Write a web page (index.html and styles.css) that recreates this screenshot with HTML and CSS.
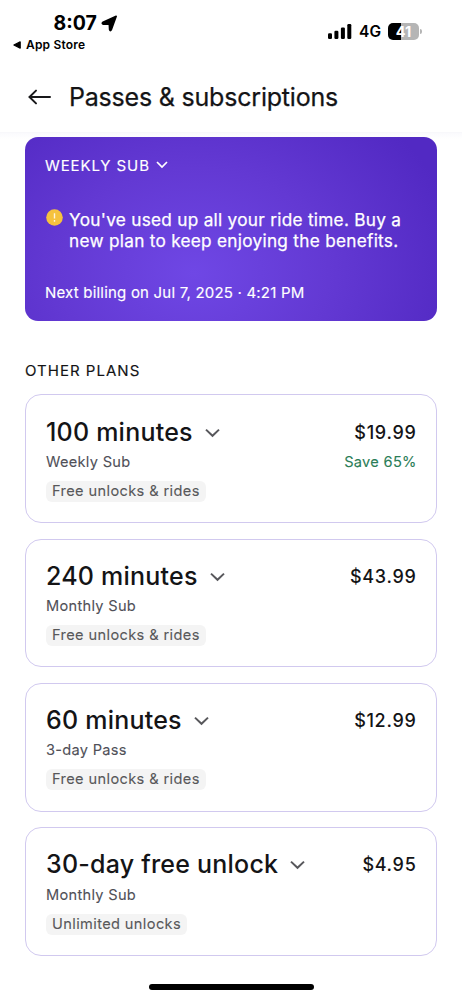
FILE: index.html
```html
<!DOCTYPE html>
<html lang="en">
<head>
<meta charset="utf-8">
<title>Passes &amp; subscriptions</title>
<link rel="stylesheet" href="styles.css">
</head>
<body>
<div class="status">
  <div class="status-left">
    <div class="time"><span>8:07</span><svg class="loc" width="17" height="17" viewBox="0 0 17 17"><path d="M15.2 1.3 10.4 14.6Q9.2 16.6 8.6 14.6L8.3 9.3 2.3 9.2Q.4 8.4 2 7.2Z" stroke="#000" stroke-width="1.6" stroke-linejoin="round"/></svg></div>
    <div class="back-app"><svg width="8" height="8" viewBox="0 0 8 8"><path d="M.9 4 7.2.9v6.2Z" stroke="#000" stroke-width="1.2" stroke-linejoin="round"/></svg><span>App Store</span></div>
  </div>
  <div class="status-right">
    <svg width="24" height="15" viewBox="0 0 24 15"><rect x="0" y="9.2" width="4" height="5.8" rx="1.2"/><rect x="6.4" y="6.7" width="4" height="8.3" rx="1.2"/><rect x="12.9" y="3.5" width="4" height="11.5" rx="1.2"/><rect x="19.3" y="0" width="4" height="15" rx="1.2"/></svg>
    <span class="net">4G</span>
    <span class="battery">41</span><span class="nub"></span>
  </div>
</div>
<header class="header">
  <svg class="arrow" width="24" height="18" viewBox="0 0 24 18"><path d="M8 2.6 1.5 9 8 15.4M1.7 9H22" fill="none" stroke="#18181a" stroke-width="2" stroke-linecap="round"/></svg>
  <h1>Passes &amp; subscriptions</h1>
</header>
<main>
  <section class="current">
    <div class="kind"><span>WEEKLY SUB</span><svg width="12" height="8" viewBox="0 0 12 8"><path d="m1 1 5 5 5-5" fill="none" stroke="#fff" stroke-width="1.7"/></svg></div>
    <div class="notice"><svg width="17" height="17" viewBox="0 0 17 17"><circle cx="8.5" cy="8.5" r="8.3" fill="#f5c23e"/><path d="M8.5 4.2v5.3M8.5 11v1.7" stroke="#fff5e0" stroke-width="1.4"/></svg><p>You've used up all your ride time. Buy a<br>new plan to keep enjoying the benefits.</p></div>
    <div class="billing">Next billing on Jul 7, 2025 · 4:21 PM</div>
  </section>
  <h2>OTHER PLANS</h2>
  <div class="plans">
    <article class="plan"><div class="row"><h3>100 minutes</h3><svg class="chev" width="15" height="10" viewBox="0 0 15 10"><path d="m1 1.6 6.5 6.2L14 1.6"/></svg><span class="price">$19.99</span></div><div class="sub"><span>Weekly Sub</span><span class="save">Save 65%</span></div><span class="tag">Free unlocks &amp; rides</span></article>
    <article class="plan"><div class="row"><h3>240 minutes</h3><svg class="chev" width="15" height="10" viewBox="0 0 15 10"><path d="m1 1.6 6.5 6.2L14 1.6"/></svg><span class="price">$43.99</span></div><div class="sub"><span>Monthly Sub</span></div><span class="tag">Free unlocks &amp; rides</span></article>
    <article class="plan"><div class="row"><h3>60 minutes</h3><svg class="chev" width="15" height="10" viewBox="0 0 15 10"><path d="m1 1.6 6.5 6.2L14 1.6"/></svg><span class="price">$12.99</span></div><div class="sub"><span>3-day Pass</span></div><span class="tag">Free unlocks &amp; rides</span></article>
    <article class="plan"><div class="row"><h3>30-day free unlock</h3><svg class="chev" width="15" height="10" viewBox="0 0 15 10"><path d="m1 1.6 6.5 6.2L14 1.6"/></svg><span class="price">$4.95</span></div><div class="sub"><span>Monthly Sub</span></div><span class="tag">Unlimited unlocks</span></article>
  </div>
</main>
<div class="home"></div>
</body>
</html>
```
FILE: styles.css
```css
* { box-sizing: border-box; margin: 0; padding: 0; }
body { width: 462px; height: 1000px; overflow: hidden; background: #fff; font-family: Inter, "Liberation Sans", sans-serif; color: #141416; display: flex; flex-direction: column; }
svg { display: block; flex: none; }
.status { height: 62px; flex: none; display: flex; justify-content: space-between; color: #000; }
.status-left { padding: 11px 0 0 13px; }
.time { display: flex; align-items: center; padding-left: 40.5px; gap: 4.5px; height: 25px; font-size: 19.5px; font-weight: 700; line-height: 25px; }
.back-app { display: flex; align-items: center; gap: 5px; font-size: 12px; font-weight: 600; line-height: 17px; letter-spacing: .2px; }
.status-right { display: flex; align-items: center; height: 18px; margin-top: 22px; padding-right: 40px; }
.net { font-size: 15.5px; font-weight: 600; margin-left: 7px; width: 29px; letter-spacing: .1px; }
.battery { width: 31px; height: 17px; border-radius: 5px; background: linear-gradient(90deg, #000 41%, #b5b5b5 41%); color: #fff; font-size: 14.5px; font-weight: 700; line-height: 17px; text-align: center; }
.nub { width: 2px; height: 5px; margin-left: 1px; border-radius: 0 2px 2px 0; background: #b5b5b5; }
.header { height: 70px; flex: none; display: flex; align-items: center; padding-left: 28px; gap: 17px; }
h1 { font-size: 25px; font-weight: 400; line-height: 32px; letter-spacing: -.2px; -webkit-text-stroke: .25px; }
main { padding: 4px 25px 0; border-top: 1px solid #f8f8fb; background: linear-gradient(#fafafd, #fff 6px); }
.current { height: 184px; padding: 17px 20px 0; border-radius: 13px; color: #fff; background: radial-gradient(ellipse 270px 210px at 41% 74%, #6f47e5 0%, #6339d3 50%, #5229c3 100%); }
.kind { display: flex; align-items: center; gap: 6px; height: 22px; font-size: 15px; letter-spacing: .9px; -webkit-text-stroke: .15px; }
.notice { display: flex; gap: 6px; margin-top: 33px; font-size: 17.2px; line-height: 21px; letter-spacing: .29px; padding-left: 1px; }
.notice p { white-space: nowrap; -webkit-text-stroke: .25px; }
.billing { margin-top: 32px; font-size: 15px; line-height: 20px; letter-spacing: .2px; -webkit-text-stroke: .15px; }
h2 { margin-top: 40px; font-size: 15px; line-height: 20px; font-weight: 400; letter-spacing: 1.02px; -webkit-text-stroke: .15px; }
.plans { display: grid; gap: 15.4px; margin-top: 13.4px; }
.plan { height: 128.8px; padding: 19.2px 20px 0; border: 1.5px solid #d1c9ef; border-radius: 16px; }
.row { display: flex; align-items: center; height: 34px; }
h3 { font-size: 25px; font-weight: 500; letter-spacing: .22px; white-space: nowrap; }
.chev { margin: 2px 0 0 12px; }
.chev path { fill: none; stroke: #58585c; stroke-width: 2; }
.price { margin: 1px -.5px 0 auto; font-size: 18px; font-weight: 500; letter-spacing: .7px; }
.sub { display: flex; justify-content: space-between; height: 22px; margin-top: 2.4px; font-size: 14.6px; line-height: 22px; letter-spacing: .3px; color: #505058; -webkit-text-stroke: .1px; }
.save { color: #2a7d57; margin-right: -.7px; }
.tag { display: inline-block; height: 21px; margin-top: 8px; padding: 0 6px; border-radius: 6px; background: #f4f4f4; color: #58585a; font-size: 14.6px; line-height: 21px; letter-spacing: .38px; -webkit-text-stroke: .1px; }
.home { width: 165px; height: 6px; margin: 28.6px auto 0; border-radius: 3px; background: #000; flex: none; }
```
